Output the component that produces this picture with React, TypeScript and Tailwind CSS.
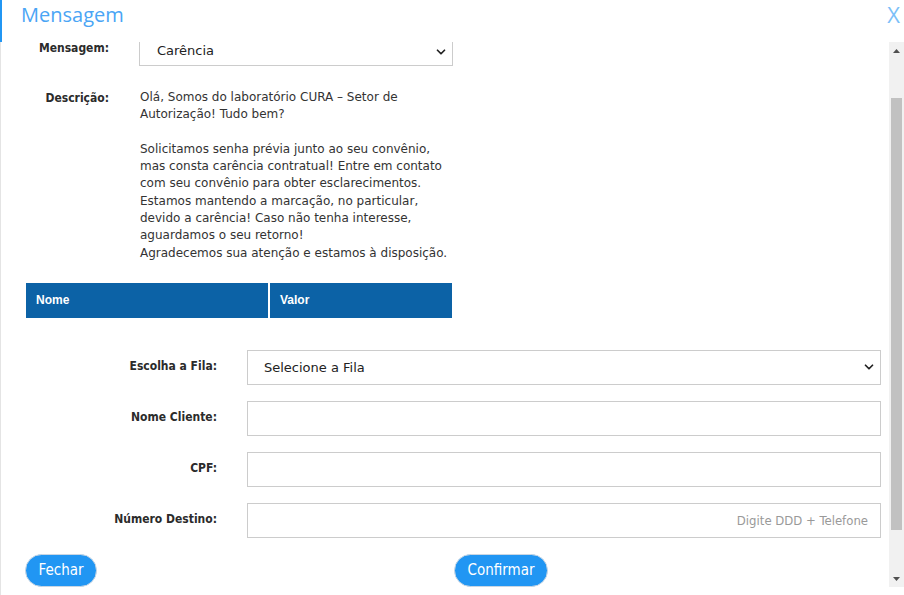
import { ChevronDown } from "lucide-react"

const label = "font-['DejaVu_Sans_Condensed','DejaVu_Sans',sans-serif] font-bold text-[12px] text-[#2b2b2b]"

function FormRow({ title, children }: { title: string; children: React.ReactNode }) {
  return (
    <div className="flex items-start">
      <div className={`w-[216px] pt-[9px] text-right leading-[14px] ${label}`}>{title}</div>
      <div className="ml-[30px] flex-1">{children}</div>
    </div>
  )
}

export default function App() {
  return (
    <div className="flex h-[595px] w-[904px] flex-col overflow-hidden bg-white font-['DejaVu_Sans',sans-serif] text-[#333]">
      {/* Header */}
      <header className="flex h-[42px] shrink-0 items-center justify-between border-l-2 border-[#2196f3] pl-[19px] pr-[4px]">
        <h1 className="-mt-[12px] font-['Open_Sans',sans-serif] text-[20px] text-[#4aa5f5]">Mensagem</h1>
        <button className="-mt-[14px] font-['Open_Sans',sans-serif] text-[22px] leading-none text-[#7cbff8]">X</button>
      </header>

      <div className="flex flex-1">
        {/* Body */}
        <div className="flex flex-1 flex-col border-l border-[#e4e4e4] pl-[25px] pr-[8px]">
          {/* Mensagem select */}
          <div className="flex items-start">
            <div className={`w-[83px] -mt-[1px] text-right leading-[14px] ${label}`}>Mensagem:</div>
            <div className="ml-[30px] flex h-[24px] w-[314px] items-center justify-between border-x border-b border-[#ccc] pl-[17px] pr-[4px] text-[13px] text-[#222]">
              <span className="-mt-[6px]">Carência</span>
              <ChevronDown className="-mt-[4px] h-[14px] w-[14px]" strokeWidth={3} />
            </div>
          </div>

          {/* Descrição */}
          <div className="mt-[23px] flex items-start">
            <div className={`w-[83px] pt-[2px] text-right leading-[14px] ${label}`}>Descrição:</div>
            <p className="ml-[31px] whitespace-nowrap text-[12px] leading-[17.3px] text-[#333]">
              Olá, Somos do laboratório CURA – Setor de
              <br />
              Autorização! Tudo bem?
              <br />
              <br />
              Solicitamos senha prévia junto ao seu convênio,
              <br />
              mas consta carência contratual! Entre em contato
              <br />
              com seu convênio para obter esclarecimentos.
              <br />
              Estamos mantendo a marcação, no particular,
              <br />
              devido a carência! Caso não tenha interesse,
              <br />
              aguardamos o seu retorno!
              <br />
              Agradecemos sua atenção e estamos à disposição.
            </p>
          </div>

          {/* Table header */}
          <div className="mt-[21px] flex h-[35px] w-[426px] gap-[2px] font-['Liberation_Sans',sans-serif] text-[12px] font-bold text-white">
            <div className="flex w-[242px] items-center bg-[#0c62a6] pl-[10px]">Nome</div>
            <div className="flex flex-1 items-center bg-[#0c62a6] pl-[10px]">Valor</div>
          </div>

          {/* Form */}
          <div className="mt-[32px] -ml-[25px] flex flex-col gap-[16px]">
            <FormRow title="Escolha a Fila:">
              <div className="flex h-[35px] items-center justify-between border border-[#ccc] pl-[16px] pr-[4px] text-[13px] text-[#222]">
                <span>Selecione a Fila</span>
                <ChevronDown className="h-[14px] w-[14px]" strokeWidth={3} />
              </div>
            </FormRow>
            <FormRow title="Nome Cliente:">
              <div className="h-[35px] border border-[#ccc]" />
            </FormRow>
            <FormRow title="CPF:">
              <div className="h-[35px] border border-[#ccc]" />
            </FormRow>
            <FormRow title="Número Destino:">
              <div className="flex h-[35px] items-center justify-end border border-[#ccc] pr-[12px] font-['DejaVu_Sans_Condensed',sans-serif] text-[13px] text-[#999]">
                Digite DDD + Telefone
              </div>
            </FormRow>
          </div>

          {/* Buttons */}
          <div className="mt-[16px] flex items-center">
            <button className="flex h-[33px] w-[72px] -ml-[1px] items-center justify-center rounded-full border border-[#c9d6e3] bg-[#2196f3] font-['DejaVu_Sans_Condensed',sans-serif] text-[15px] text-white">
              Fechar
            </button>
            <button className="ml-[357px] flex h-[33px] w-[94px] items-center justify-center rounded-full border border-[#c9d6e3] bg-[#2196f3] font-['DejaVu_Sans_Condensed',sans-serif] text-[15px] text-white">
              Confirmar
            </button>
          </div>
        </div>

        {/* Scrollbar */}
        <div className="mb-[8px] flex w-[15px] shrink-0 flex-col items-center bg-[#f1f1f1]">
          <div className="flex h-[17px] items-center justify-center">
            <svg width="7" height="4" viewBox="0 0 7 4"><path d="M3.5 0L7 4H0z" fill="#505050" /></svg>
          </div>
          <div className="mt-[39px] h-[432px] w-[11px] bg-[#c1c1c1]" />
          <div className="flex-1" />
          <div className="flex h-[17px] items-center justify-center">
            <svg width="7" height="4" viewBox="0 0 7 4"><path d="M0 0h7L3.5 4z" fill="#505050" /></svg>
          </div>
        </div>
      </div>
    </div>
  )
}
